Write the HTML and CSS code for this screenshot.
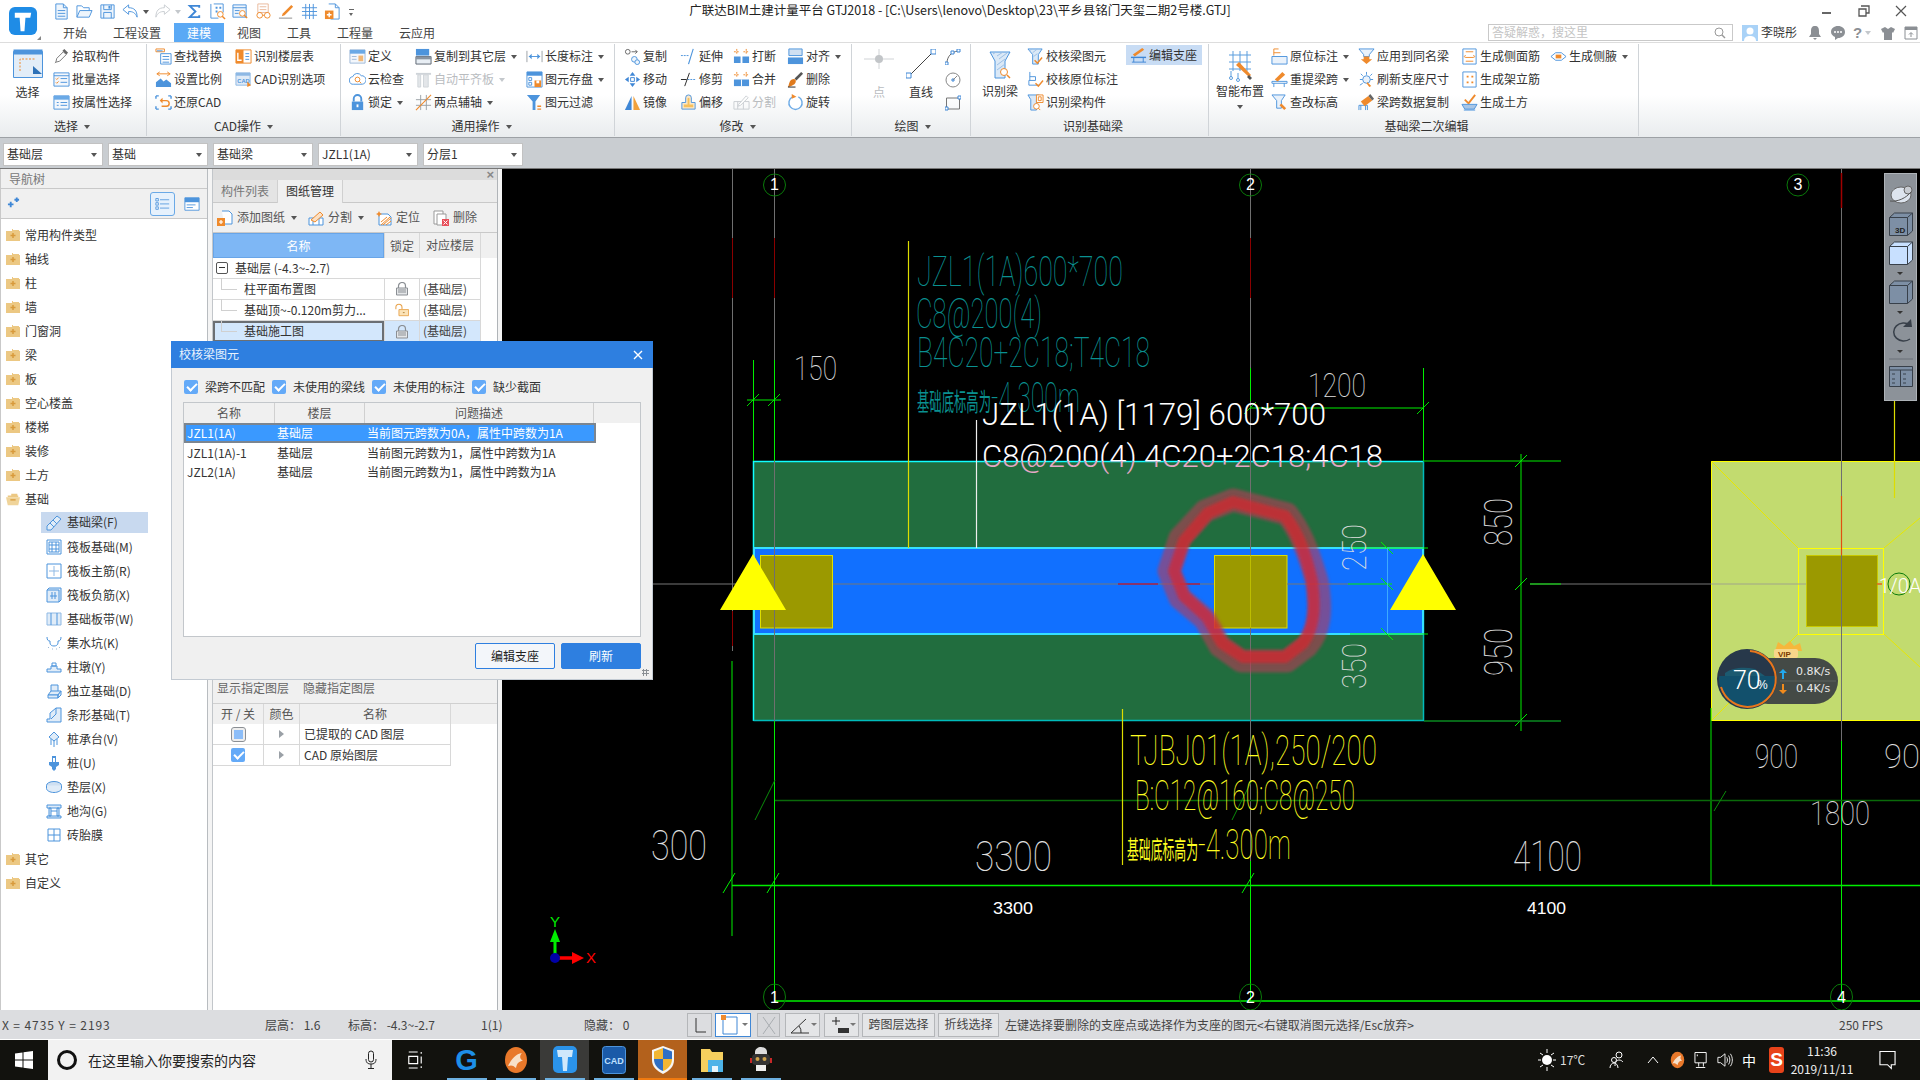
FILE: index.html
```html
<!DOCTYPE html>
<html lang="zh">
<head>
<meta charset="utf-8">
<title>广联达BIM土建计量平台 GTJ2018</title>
<link rel="stylesheet" href="styles.css">
</head>
<body>
<svg class="sprite" width="0" height="0" aria-hidden="true">
<defs>
<symbol id="i-doc" viewBox="0 0 18 18"><path d="M3 1h8l4 4v12H3z" fill="#eef5fc" stroke="#4d94dc"/><path d="M11 1v4h4M5 8h8M5 11h8M5 14h8" fill="none" stroke="#4d94dc"/></symbol>
<symbol id="i-open" viewBox="0 0 18 18"><path d="M1 15V3h5l2 2h6v3" fill="none" stroke="#4d94dc"/><path d="M1 15l3-7h13l-3 7z" fill="#eef5fc" stroke="#4d94dc"/></symbol>
<symbol id="i-save" viewBox="0 0 18 18"><path d="M2 2h14v14H2z" fill="#eef5fc" stroke="#4d94dc"/><path d="M5 2v5h8V2M5 16v-6h8v6" fill="none" stroke="#4d94dc"/><path d="M10 3h2v3h-2z" fill="#4d94dc"/></symbol>
<symbol id="i-undo" viewBox="0 0 18 18"><path d="M7 2L1 7l6 5V9c4 0 7 1 9 6 0-7-3-10-9-10z" fill="#fff" stroke="#4d94dc"/></symbol>
<symbol id="i-redo" viewBox="0 0 18 18"><path d="M11 2l6 5-6 5V9c-4 0-7 1-9 6 0-7 3-10 9-10z" fill="#fff" stroke="#c8ccd0"/></symbol>
<symbol id="i-sum" viewBox="0 0 18 18"><path d="M14 5V3H4l6 6-6 6h10v-2" fill="none" stroke="#3f87d6" stroke-width="2"/></symbol>
<symbol id="i-tabmag" viewBox="0 0 18 18"><path d="M2 1v15h8M5 1h10v9" fill="none" stroke="#4d94dc"/><path d="M7 4h2v2H7zM11 4h2v2h-2zM7 8h2v2H7z" fill="#4d94dc"/><circle cx="12" cy="12" r="3" fill="#fff" stroke="#ef8a2c"/><path d="M14 14l3 3" stroke="#ef8a2c" stroke-width="1.5"/></symbol>
<symbol id="i-listmag" viewBox="0 0 18 18"><path d="M1 2h14v13H1z" fill="#eef5fc" stroke="#4d94dc"/><path d="M1 5h14M3 8h5M3 11h4" stroke="#4d94dc"/><circle cx="11" cy="11" r="3" fill="#fff" stroke="#ef8a2c"/><path d="M13 13l3 3" stroke="#ef8a2c" stroke-width="1.5"/></symbol>
<symbol id="i-glass" viewBox="0 0 18 18"><path d="M3 1h11v9H3z" fill="#fff" stroke="#e9b89a"/><path d="M5 4h7M5 7h7" stroke="#e9b89a"/><circle cx="5" cy="13" r="3" fill="none" stroke="#ef8a2c"/><circle cx="13" cy="13" r="3" fill="none" stroke="#ef8a2c"/><path d="M8 13h2" stroke="#ef8a2c"/></symbol>
<symbol id="i-pencil" viewBox="0 0 18 18"><path d="M5 11L14 2l2 2-9 9-3 1z" fill="#ef8a2c"/><path d="M1 16h14" stroke="#888"/></symbol>
<symbol id="i-grid" viewBox="0 0 18 18"><path d="M1 5h16M1 9h16M1 13h16M5 1v16M9 1v16M13 1v16" stroke="#4d94dc"/></symbol>
<symbol id="i-docplus" viewBox="0 0 18 18"><path d="M5 1h7l4 4v12H7" fill="#fff" stroke="#4d94dc"/><path d="M12 1v4h4" fill="none" stroke="#4d94dc"/><path d="M1 8h9v9H1z" fill="#ef8a2c"/><path d="M5.5 10v5M3 12.500h5" stroke="#fff" stroke-width="1.500"/></symbol>
<symbol id="i-select" viewBox="0 0 30 30"><path d="M.5 2.500h29v26H.5z" fill="#e2edf8" stroke="#4d94dc"/><path d="M.5.500h29v5H.5z" fill="#4d94dc"/><path d="M7 22V10h16" fill="none" stroke="#ef8a2c" stroke-dasharray="2 1.500"/><path d="M20 17l9 8h-9z" fill="#2e72b8"/></symbol>
<symbol id="i-pick" viewBox="0 0 18 18"><path d="M3 15l1-4 7-7 3 3-7 7z" fill="#fff" stroke="#777"/><path d="M10 3l2-2 4 4-2 2z" fill="#666"/><path d="M2 16l1-1" stroke="#777"/></symbol>
<symbol id="i-batch" viewBox="0 0 18 18"><path d="M1 2h16v14H1z" fill="#f3f7fc" stroke="#4d94dc"/><path d="M1 5h16" stroke="#4d94dc"/><path d="M3 8l1 1 2-2M3 12l1 1 2-2" fill="none" stroke="#ef8a2c"/><path d="M8 8h7M8 12h7" stroke="#4d94dc"/></symbol>
<symbol id="i-attr" viewBox="0 0 18 18"><path d="M1 2h16v14H1z" fill="#f3f7fc" stroke="#4d94dc"/><path d="M1 2h16v4H1z" fill="#6aa9e6"/><path d="M4 9h2M4 12h2M8 9h7M8 12h7" stroke="#4d94dc"/></symbol>
<symbol id="i-find" viewBox="0 0 18 18"><path d="M6 6h11v11H6z" fill="#fff" stroke="#4d94dc"/><path d="M8 9h7M8 12h7M8 15h7" stroke="#4d94dc"/><path d="M1 1h9v3H1z" fill="none" stroke="#ef8a2c"/><path d="M2 3h6" stroke="#4d94dc"/></symbol>
<symbol id="i-scale" viewBox="0 0 18 18"><path d="M1 17v-5l5-4 3 3 3-2 5 4v4z" fill="#4d94dc"/><path d="M2 3h14M2 3l3-2M2 3l3 2M16 3l-3-2M16 3l-3 2" fill="none" stroke="#ef8a2c"/></symbol>
<symbol id="i-restore" viewBox="0 0 18 18"><path d="M1 2h3M1 2v3M17 2h-3M17 2v3M1 16h3M1 16v-3M17 16h-3M17 16v-3" fill="none" stroke="#4d94dc" stroke-width="1.500"/><path d="M6 7h6a2 2 0 0 1 0 6H7" fill="none" stroke="#ef8a2c" stroke-width="1.500"/><path d="M8 4L5 7l3 3z" fill="#ef8a2c"/></symbol>
<symbol id="i-fltable" viewBox="0 0 18 18"><path d="M1 2h16v14H1z" fill="#fff" stroke="#ef8a2c"/><path d="M1 2h8v14H1z" fill="#ef8a2c"/><path d="M3 5v8h4" fill="none" stroke="#fff" stroke-width="1.500"/><path d="M11 6h4M11 9h4M11 12h4" stroke="#4d94dc"/></symbol>
<symbol id="i-cadopt" viewBox="0 0 18 18"><path d="M1 2h15v13H1z" fill="#dfeaf6" stroke="#8db8e4"/><path d="M1 2h15v3H1z" fill="#8db8e4"/><text x="2.500" y="12.500" font-size="6" fill="#4d94dc" class="ictext">CAD</text><path d="M13 11l4 4-4 2z" fill="#ef8a2c"/></symbol>
<symbol id="i-define" viewBox="0 0 18 18"><path d="M1 2h16v14H1z" fill="#f3f7fc" stroke="#9db9d8"/><path d="M1 2h16v4H1z" fill="#6aa9e6"/><path d="M3 9h5M3 12h5" stroke="#9db9d8"/><path d="M10 8h5v6h-5z" fill="#f1b877"/></symbol>
<symbol id="i-cloud" viewBox="0 0 18 18"><path d="M5 14a4 4 0 0 1-1-8 5 5 0 0 1 9-1 4.500 4.500 0 0 1 1 9z" fill="#fff" stroke="#4d94dc"/><circle cx="9" cy="9" r="2.500" fill="none" stroke="#ef8a2c"/><path d="M11 11l2 2" stroke="#ef8a2c"/></symbol>
<symbol id="i-lock" viewBox="0 0 18 18"><path d="M5 8V5a4 4 0 0 1 8 0v3" fill="none" stroke="#4d94dc" stroke-width="2"/><path d="M3 8h12v9H3z" fill="#4d94dc"/><path d="M8 11h2v3H8z" fill="#fff"/></symbol>
<symbol id="i-copyto" viewBox="0 0 18 18"><path d="M1 1h14v7H1z" fill="#4d94dc"/><path d="M1 9h16v8H1z" fill="#e8eef4" stroke="#5a6470"/><path d="M1 9h16v3H1z" fill="#8a94a0"/></symbol>
<symbol id="i-auto" viewBox="0 0 18 18"><path d="M1 2h16v2H1z" fill="#cfd4d9"/><path d="M3 4h3v13H3zM9 4h5v13H9z" fill="#e3e6e9" stroke="#cfd4d9"/></symbol>
<symbol id="i-twopt" viewBox="0 0 18 18"><path d="M1 6h16M1 12h16M6 1v16M12 1v16" stroke="#9aa0a6"/><path d="M1 17L17 1" stroke="#ef8a2c" stroke-width="1.200"/></symbol>
<symbol id="i-length" viewBox="0 0 18 18"><path d="M1 3v12M17 3v12" stroke="#9aa0a6"/><path d="M3 9h12" stroke="#4d94dc"/><path d="M3 9l3-3v6zM15 9l-3-3v6z" fill="#4d94dc"/></symbol>
<symbol id="i-saveel" viewBox="0 0 18 18"><path d="M1 1h16v16H1z" fill="#fff" stroke="#4d94dc"/><path d="M1 1h16v4H1z" fill="#4d94dc"/><path d="M3 7h3v3H3zM3 12h3v3H3z" fill="none" stroke="#4d94dc"/><path d="M9 10h7v7H9z" fill="#ef8a2c"/><path d="M11 10h3v3h-3z" fill="#fff"/></symbol>
<symbol id="i-filter" viewBox="0 0 18 18"><path d="M1 1h14l-5 7v9H7V8z" fill="#4d94dc"/><path d="M12 13h4M12 16h4" stroke="#ef8a2c" stroke-width="1.500"/></symbol>
<symbol id="i-copy" viewBox="0 0 18 18"><circle cx="4" cy="4" r="2.500" fill="none" stroke="#666"/><circle cx="11" cy="12" r="3" fill="#eef5fc" stroke="#4d94dc"/><circle cx="14" cy="15" r="2.500" fill="#eef5fc" stroke="#4d94dc"/><path d="M8 4h6l-2-2m2 2l-2 2" fill="none" stroke="#666"/></symbol>
<symbol id="i-move" viewBox="0 0 18 18"><path d="M9 1l3 4H6zM9 17l3-4H6zM1 9l4-3v6zM17 9l-4-3v6z" fill="#3f87d6"/><path d="M7 7h4v4H7z" fill="none" stroke="#3f87d6"/></symbol>
<symbol id="i-mirror" viewBox="0 0 18 18"><path d="M8 2v15H1z" fill="#3f87d6"/><path d="M10 2v15h7z" fill="#f1a13c"/></symbol>
<symbol id="i-extend" viewBox="0 0 18 18"><path d="M1 8h8" stroke="#4d94dc" stroke-dasharray="2 1"/><path d="M14 1L9 17" stroke="#4d94dc" stroke-width="1.200"/></symbol>
<symbol id="i-trim" viewBox="0 0 18 18"><path d="M1 9h6" stroke="#222"/><path d="M8 9h9" stroke="#4d94dc" stroke-dasharray="2 1"/><path d="M10 2L5 16" stroke="#222"/></symbol>
<symbol id="i-offset" viewBox="0 0 18 18"><path d="M6 4a3 3 0 0 1 6 0v5h4v7H2V9h4z" fill="#fbe7c8" stroke="#4d94dc"/><path d="M8 5a1 1 0 0 1 2 0v6h4v3H4v-3h4z" fill="#f6c05c"/></symbol>
<symbol id="i-break" viewBox="0 0 18 18"><path d="M1 9h7v7H1zM10 9h7v7h-7z" fill="#4d94dc"/><path d="M1 4h6M4 1v6M11 4h6M14 1v6" stroke="#ef8a2c" stroke-dasharray="2 1"/></symbol>
<symbol id="i-merge" viewBox="0 0 18 18"><path d="M1 9h16v7H1z" fill="#4d94dc"/><path d="M9 9v7" stroke="#fff"/><path d="M1 4h6M4 1v6M11 4h6M14 1v6" stroke="#ef8a2c" stroke-dasharray="2 1"/></symbol>
<symbol id="i-split" viewBox="0 0 18 18"><path d="M1 8h16v8H1zM5 8v8M11 8v8" fill="none" stroke="#c9cdd1"/><path d="M6 11L14 2l2 2-8 8-3 1z" fill="#fff" stroke="#c9cdd1"/></symbol>
<symbol id="i-align" viewBox="0 0 18 18"><path d="M2 1h14v7H2z" fill="#cfe0f2" stroke="#4d94dc"/><path d="M1 10h16v7H1z" fill="#4d94dc"/></symbol>
<symbol id="i-del" viewBox="0 0 18 18"><path d="M8 8L15 1l2 2-7 7z" fill="#555"/><path d="M3 11c2-3 5-3 6-2 1 2 0 5-3 6-2 1-4 2-5 2 1-2 1-4 2-6z" fill="#e07b1e"/><path d="M1 17h8" stroke="#222"/></symbol>
<symbol id="i-rotate" viewBox="0 0 18 18"><path d="M6 3a7 7 0 1 0 6 0" fill="#fff" stroke="#6aa9e6" stroke-width="1.500"/><path d="M5 0l5 3-5 2z" fill="#ef8a2c"/></symbol>
<symbol id="i-point" viewBox="0 0 30 20"><path d="M0 10h30M15 0v20" stroke="#d0d3d6"/><circle cx="15" cy="10" r="4" fill="#c2c5c8"/></symbol>
<symbol id="i-line" viewBox="0 0 30 30"><path d="M3 27L27 3" stroke="#444"/><path d="M0 24h5v5H0zM25 0h5v5h-5z" fill="#fff" stroke="#3f87d6"/></symbol>
<symbol id="i-arc" viewBox="0 0 16 16"><path d="M2 14C2 8 6 3 13 2" fill="none" stroke="#666"/><path d="M0 13h3v3H0zM12 0h3v3h-3zM6 2h3v3H6z" fill="#fff" stroke="#3f87d6"/></symbol>
<symbol id="i-circ" viewBox="0 0 16 16"><circle cx="8" cy="8" r="7" fill="none" stroke="#888"/><path d="M7 7h2v2H7z" fill="#fff" stroke="#3f87d6"/><path d="M8 8l4-4" stroke="#888"/></symbol>
<symbol id="i-rect" viewBox="0 0 16 16"><path d="M1.500 3h13v11h-13z" fill="none" stroke="#777"/><path d="M0 12h3v3H0zM13 1h3v3h-3z" fill="#fff" stroke="#3f87d6"/></symbol>
<symbol id="i-idbeam" viewBox="0 0 22 28"><path d="M1 1h20l-5 9v17H6V10z" fill="#dbe9f7" stroke="#4d94dc"/><path d="M4 3l3-2M8 5l6-4M10 8l8-6M8 14l8-6M8 19l8-6" stroke="#9dc0e6"/><circle cx="15" cy="21" r="3.500" fill="#fff" stroke="#ef8a2c"/><path d="M18 24l3 3" stroke="#ef8a2c" stroke-width="1.500"/></symbol>
<symbol id="i-chkbeam" viewBox="0 0 18 18"><path d="M1 1h15l-4 6v10H6V7z" fill="#dbe9f7" stroke="#4d94dc"/><path d="M3 3l2-2M6 5l5-4M7 9l4-3" stroke="#9dc0e6"/><path d="M8 13l3 3 5-6" fill="none" stroke="#ef8a2c" stroke-width="1.500"/></symbol>
<symbol id="i-chkmark" viewBox="0 0 18 18"><path d="M3 1v9M3 6h6v4H2v5h11" fill="none" stroke="#4d94dc"/><path d="M9 13l3 3 5-6" fill="none" stroke="#ef8a2c" stroke-width="1.500"/></symbol>
<symbol id="i-idmem" viewBox="0 0 18 18"><path d="M1 1h12l-3 5v11H4V6z" fill="#dbe9f7" stroke="#4d94dc"/><path d="M10 1h7v8h-7z" fill="#fff" stroke="#ef8a2c"/><path d="M12 3h3v4h-3z" fill="none" stroke="#ef8a2c"/><circle cx="10" cy="13" r="3" fill="#fff" stroke="#ef8a2c"/><path d="M12 15l2 2" stroke="#ef8a2c"/></symbol>
<symbol id="i-edsup" viewBox="0 0 18 18"><path d="M3 8l10-7 2 2-10 7z" fill="#ef8a2c"/><path d="M1 11h16" stroke="#3f87d6" stroke-width="1.500"/><path d="M4 11v5M14 11v5M2 16h15" stroke="#3f87d6"/></symbol>
<symbol id="i-smart" viewBox="0 0 28 32"><path d="M3 5h22M3 12h22M3 19h22M7 1v20M14 1v20M21 1v20" stroke="#5b9ddd"/><path d="M13 12l12 13-2 2L10 15z" fill="#ef8a2c"/><path d="M23 25l3 3-2 2-3-3z" fill="#555"/><path d="M5 21v6M12 23v6" stroke="#5b9ddd"/><circle cx="5" cy="28" r="1.500" fill="none" stroke="#5b9ddd"/><circle cx="12" cy="30" r="1.500" fill="none" stroke="#5b9ddd"/></symbol>
<symbol id="i-orig" viewBox="0 0 18 18"><path d="M1 9h16v8H1z" fill="#eaf2fb" stroke="#4d94dc"/><path d="M3 8V1h5M3 5h7" fill="none" stroke="#ef8a2c"/></symbol>
<symbol id="i-retake" viewBox="0 0 18 18"><path d="M1 11h16v2H1zM3 13v4M14 13v4" fill="none" stroke="#4d94dc"/><path d="M4 9L12 1l3 3-8 7z" fill="#ef8a2c"/></symbol>
<symbol id="i-elev" viewBox="0 0 18 18"><path d="M1 1h14l-4 6v8H6V7z" fill="#eaf2fb" stroke="#4d94dc"/><path d="M11 10l5 5-2 2-5-5z" fill="#ef8a2c"/></symbol>
<symbol id="i-apply" viewBox="0 0 18 18"><path d="M1 1h16l-5 6v2H6V7z" fill="#eaf2fb" stroke="#4d94dc"/><path d="M6 9h6v3h3l-6 5-6-5h3z" fill="#ef8a2c"/></symbol>
<symbol id="i-refresh" viewBox="0 0 18 18"><circle cx="9" cy="9" r="4" fill="#eaf2fb" stroke="#4d94dc"/><path d="M9 1v3M3 3l2 2M15 3l-2 2M2 9h3M16 9h-3" stroke="#4d94dc"/><path d="M10 12l4 4-2 1-3-4z" fill="#ef8a2c"/><path d="M2 15l3-2" stroke="#4d94dc"/></symbol>
<symbol id="i-bcopy" viewBox="0 0 18 18"><path d="M1 17v-5h9v5M3 12v5M8 12v5" fill="none" stroke="#4d94dc"/><path d="M3 8l8-6 4 5-8 6z" fill="#ef8a2c"/><path d="M11 2l2-2 4 5-2 2z" fill="#666"/></symbol>
<symbol id="i-side" viewBox="0 0 18 18"><path d="M2 1h14v16H2z" fill="#fff" stroke="#4d94dc"/><path d="M5 4h8M5 8c-2 0-2 2 0 2h8c2 0 2-2 0-2M5 14h8" fill="none" stroke="#ef8a2c"/></symbol>
<symbol id="i-erect" viewBox="0 0 18 18"><path d="M2 1h14v16H2z" fill="#fff" stroke="#4d94dc"/><path d="M6 5h2v2H6zM11 5h2v2h-2zM6 11h2v2H6zM11 11h2v2h-2z" fill="#ef8a2c"/></symbol>
<symbol id="i-earth" viewBox="0 0 18 18"><path d="M4 6l4 4 7-9" fill="none" stroke="#ef8a2c" stroke-width="2"/><path d="M1 11h16l-3 5H4z" fill="#a9c6e6" stroke="#4d94dc"/><path d="M3 17h12" stroke="#4d94dc"/></symbol>
<symbol id="i-haunch" viewBox="0 0 18 18"><path d="M1 9l5-4h6l5 4-5 4H6z" fill="none" stroke="#4d94dc"/><path d="M6 7h6v4H6z" fill="#ef8a2c"/></symbol>
<symbol id="i-tasks" viewBox="0 0 18 18"><path d="M1 3h3v3H1zM1 8h3v3H1zM1 13h3v3H1z" fill="none" stroke="#4d94dc"/><path d="M6 4.500h11M6 9.500h11M6 14.500h11" stroke="#4d94dc"/></symbol>
<symbol id="i-panel" viewBox="0 0 18 18"><path d="M1 2h16v14H1z" fill="#fff" stroke="#4d94dc"/><path d="M1 2h16v5H1z" fill="#4d94dc"/><path d="M3 10h10M3 13h7" stroke="#4d94dc"/></symbol>
<symbol id="i-sparkle" viewBox="0 0 14 14"><path d="M1 8h6M4 5v6" stroke="#3f87d6" stroke-width="2"/><path d="M8 3h5M10.500.500v5" stroke="#3f87d6" stroke-width="2"/></symbol>
<symbol id="i-addpg" viewBox="0 0 16 16"><path d="M5 1h7l3 3v10H7" fill="#fff" stroke="#4d94dc"/><path d="M0 8h8v8H0z" fill="#ef8a2c"/><path d="M4 10v4M2 12h4" stroke="#fff" stroke-width="1.200"/></symbol>
<symbol id="i-sp" viewBox="0 0 16 16"><path d="M1 8h14v7H1zM5 8v7M11 8v7" fill="#fff" stroke="#4d94dc"/><path d="M3 10l9-8 3 3-8 7z" fill="#fbe0c4" stroke="#ef8a2c"/></symbol>
<symbol id="i-loc" viewBox="0 0 16 16"><path d="M3 4h9l3 3v8H3z" fill="#fff" stroke="#4d94dc"/><path d="M3 1l1 2 2 1-2 1-1 2-1-2-2-1 2-1z" fill="#ef8a2c"/><path d="M5 15l9-8M7 15l8-7M5 12l6-5M10 15l5-4" stroke="#ef8a2c"/></symbol>
<symbol id="i-delp" viewBox="0 0 16 16"><path d="M1 1h9v13H1z" fill="#fff" stroke="#999"/><path d="M4 4h9v11H4z" fill="#fff" stroke="#999"/><path d="M9 9h7v7H9z" fill="#e8505b"/><path d="M10.500 10.500l4 4M14.500 10.500l-4 4" stroke="#fff"/></symbol>
<symbol id="i-padlock" viewBox="0 0 14 14"><path d="M3.500 6V4a3.500 3.500 0 0 1 7 0v2" fill="none" stroke="#8b8f94" stroke-width="1.200"/><path d="M1.500 6h11v7h-11z" fill="#e4e6e8" stroke="#8b8f94"/><path d="M3 8h8M3 10h8" stroke="#8b8f94"/></symbol>
<symbol id="i-unlock" viewBox="0 0 16 14"><path d="M1 6V4a3.500 3.500 0 0 1 7 0v2" fill="none" stroke="#e8a24a" stroke-width="1.200"/><path d="M4.500 6.500h11v7h-11z" fill="#fbe3b8" stroke="#e8a24a"/><path d="M9 10h2" stroke="#a87a30"/></symbol>
<symbol id="i-fold" viewBox="0 0 14 14"><path d="M0 3h6V1h7v2h1v10H0z" fill="#ecc883"/><path d="M7 1h6v1H7z" fill="#fff"/><path d="M7 5v5M4.500 7.500h5" stroke="#d89a3c" stroke-width="1.500"/></symbol>
<symbol id="i-foldo" viewBox="0 0 16 14"><path d="M2 3h4V1h7v2h1v2H2z" fill="#ecc883"/><path d="M0 5h16l-2 9H2z" fill="#f0d49a"/><path d="M5 8h6" stroke="#d89a3c" stroke-width="1.500"/></symbol>
<symbol id="t-beam" viewBox="0 0 16 16"><path d="M1 11L11 1l4 3L5 15H1z" fill="#e0ecf8" stroke="#4d94dc"/><path d="M4 8l4 4M7 5l4 4" stroke="#4d94dc"/></symbol>
<symbol id="t-raft" viewBox="0 0 16 16"><path d="M1 1h14v14H1z" fill="none" stroke="#4d94dc"/><path d="M3 3h10v10H3zM3 6h10M3 10h10M6 3v10M10 3v10" fill="none" stroke="#4d94dc"/></symbol>
<symbol id="t-rebar" viewBox="0 0 16 16"><path d="M1 1h14v14H1z" fill="none" stroke="#4d94dc"/><path d="M8 3v10M3 8h10" stroke="#8fb9e4"/></symbol>
<symbol id="t-neg" viewBox="0 0 16 16"><path d="M1 3h12v12H1zM1 3l2-2h12v12l-2 2" fill="#e0ecf8" stroke="#4d94dc"/><path d="M6 5v7M9 5v7M4 9h7" stroke="#4d94dc"/></symbol>
<symbol id="t-band" viewBox="0 0 16 16"><path d="M1 2h14v12H1z" fill="#e0ecf8" stroke="#8fb9e4"/><path d="M5 2v12M11 2v12" stroke="#4d94dc"/></symbol>
<symbol id="t-pit" viewBox="0 0 16 16"><path d="M1 2c0 3 1 4 3 4v2c0 2 2 3 4 3s4-1 4-3V6c2 0 3-1 3-4" fill="none" stroke="#4d94dc"/><path d="M2 12l1 1M6 14h1M10 14h1M14 12l-1 1" stroke="#9db9d8"/></symbol>
<symbol id="t-pier" viewBox="0 0 16 16"><path d="M1 13v-3h4V7h6v3h4v3z" fill="#e0ecf8" stroke="#4d94dc"/><path d="M6 4h4v3H6z" fill="none" stroke="#4d94dc"/></symbol>
<symbol id="t-ind" viewBox="0 0 16 16"><path d="M5 8V2h7v6M2 12l3-4h10l-3 4z" fill="#e0ecf8" stroke="#4d94dc"/><path d="M2 12h10v3H2zM12 12l3-4v4l-3 3z" fill="#e0ecf8" stroke="#4d94dc"/></symbol>
<symbol id="t-strip" viewBox="0 0 16 16"><path d="M1 15v-3h3V6l6-5h5v14z" fill="#e0ecf8" stroke="#4d94dc"/><path d="M10 1v6l-5 5" fill="none" stroke="#4d94dc"/></symbol>
<symbol id="t-cap" viewBox="0 0 16 16"><path d="M8 1l5 5-5 4-5-4z" fill="#e0ecf8" stroke="#4d94dc"/><path d="M5 8v6M8 10v6M11 8v6" stroke="#4d94dc"/></symbol>
<symbol id="t-pile" viewBox="0 0 16 16"><path d="M6 1h4v6h3v3l-3 2v2l-2 2-2-2v-2L3 10V7h3z" fill="#4d94dc"/><path d="M7 3h2v4H7z" fill="#fff"/></symbol>
<symbol id="t-pad" viewBox="0 0 16 16"><ellipse cx="8" cy="6.500" rx="7.500" ry="4" fill="#cfe0f2" stroke="#4d94dc"/><path d="M.5 6.500v3c0 2 3.500 4 7.500 4s7.500-2 7.500-4v-3" fill="#e0ecf8" stroke="#4d94dc"/></symbol>
<symbol id="t-ditch" viewBox="0 0 16 16"><path d="M1 2h14v3H1zM3 5h2v8H3zM11 5h2v8h-2zM1 13h14v2H1zM5 8h6" fill="#e0ecf8" stroke="#4d94dc"/></symbol>
<symbol id="t-mold" viewBox="0 0 16 16"><path d="M2 2h12v12H2zM8 2v12M2 8h12" fill="none" stroke="#4d94dc"/></symbol>
<symbol id="i-ortho" viewBox="0 0 24 24"><path d="M8 5v14h10" fill="none" stroke="#333"/></symbol>
<symbol id="i-snap" viewBox="0 0 24 24"><path d="M4 4h14v17H4z" fill="#fff" stroke="#3f87d6"/><path d="M2 2h5v5H2z" fill="#ef8a2c"/></symbol>
<symbol id="i-cross" viewBox="0 0 24 24"><path d="M6 4l12 17M18 4L6 21" stroke="#a9adb1"/></symbol>
<symbol id="i-angle" viewBox="0 0 24 24"><path d="M3 20h18M3 20L18 6" fill="none" stroke="#333"/><path d="M11 13a9 9 0 0 1 2 7" fill="none" stroke="#333"/></symbol>
<symbol id="i-plusb" viewBox="0 0 24 24"><path d="M5 8h8M9 4v8" stroke="#222"/><path d="M11 15h11v5H11z" fill="#333"/></symbol>
</defs>
</svg>

<div class="app">
  <header class="top">
    <div class="logo-wrap">
      <svg class="logo" viewBox="0 0 30 30"><rect width="29" height="29" rx="6" fill="#1f8ce6"/><path d="M6 6h17l-1 5h-5l-1 14h-4l-1-14H6z" fill="#fff"/></svg>
      <span class="logo-grip"></span>
    </div>
    <div class="top-main">
      <div class="qat">
        <svg class="qi"><use href="#i-doc"/></svg>
        <svg class="qi"><use href="#i-open"/></svg>
        <svg class="qi"><use href="#i-save"/></svg>
        <svg class="qi"><use href="#i-undo"/></svg><i class="caret-d qc"></i>
        <svg class="qi qr"><use href="#i-redo"/></svg><i class="caret-l qc"></i>
        <svg class="qi"><use href="#i-sum"/></svg>
        <svg class="qi"><use href="#i-tabmag"/></svg>
        <svg class="qi"><use href="#i-listmag"/></svg>
        <svg class="qi"><use href="#i-glass"/></svg>
        <svg class="qi"><use href="#i-pencil"/></svg>
        <svg class="qi"><use href="#i-grid"/></svg>
        <svg class="qi"><use href="#i-docplus"/></svg>
        <i class="qat-more"></i>
      </div>
      <div class="tabs-row">
        <nav class="tabs">
          <span class="tab">开始</span><span class="tab">工程设置</span><span class="tab tab-on">建模</span><span class="tab">视图</span><span class="tab">工具</span><span class="tab">工程量</span><span class="tab">云应用</span>
        </nav>
        <div class="help">
          <div class="search"><span>答疑解惑，搜这里</span><svg class="mag" viewBox="0 0 12 12"><circle cx="5" cy="5" r="4" fill="none" stroke="#999"/><path d="M8 8l3 3" stroke="#999" stroke-width="1.400"/></svg></div>
          <svg class="avatar" viewBox="0 0 16 16"><rect width="16" height="16" fill="#a9d2f7"/><circle cx="8" cy="6" r="3.500" fill="#fff"/><path d="M2 16c0-4 3-5 6-5s6 1 6 5z" fill="#fff"/></svg>
          <span class="uname">李晓彤</span>
          <svg class="hi hi-bell" viewBox="0 0 14 16"><path d="M7 1c3 0 4 2 4 5v3l2 3H1l2-3V6c0-3 1-5 4-5z" fill="#8b8f94"/><path d="M5 13h4l-2 2z" fill="#8b8f94"/></svg>
          <svg class="hi hi-chat" viewBox="0 0 16 16"><path d="M8 1c4 0 7 2.500 7 6s-3 6-7 6l-3 2v-3C3 11 1 9.500 1 7c0-3.500 3-6 7-6z" fill="#8b8f94"/><path d="M4 7h2M7 7h2M10 7h2" stroke="#fff" stroke-width="1.500"/></svg>
          <span class="hq">?</span><i class="caret-l hqc"></i>
          <svg class="hi hi-shirt" viewBox="0 0 14 16"><path d="M4 2L0 4l2 4 1-1v8h8V7l1 1 2-4-4-2-3 2z" fill="#8b8f94"/></svg>
          <svg class="hi hi-box" viewBox="0 0 14 14"><path d="M1 1h12v12H1z" fill="#fff" stroke="#8b8f94"/><path d="M1 1h12v3H1z" fill="#8b8f94"/><path d="M7 11V7M5 8.500l2-2 2 2" fill="none" stroke="#8b8f94"/></svg>
        </div>
      </div>
    </div>
    <div class="title">广联达BIM土建计量平台 GTJ2018 - [C:\Users\lenovo\Desktop\23\平乡县铭门天玺二期2号楼.GTJ]</div>
    <div class="win">
      <svg viewBox="0 0 12 12" class="wb"><path d="M1 7h9v2H1z" fill="#666"/></svg>
      <svg viewBox="0 0 12 12" class="wb"><path d="M3 1h8v7H8M1 4h7v7H1zM1 4h7" fill="none" stroke="#555" stroke-width="1.300"/></svg>
      <svg viewBox="0 0 12 12" class="wb"><path d="M1 1l10 10M11 1L1 11" stroke="#555" stroke-width="1.200"/></svg>
    </div>
  </header>

  <section class="ribbon">
    <div class="group g1">
      <div class="gbody">
        <div class="big big-sel"><svg class="bi-sel"><use href="#i-select"/></svg><span>选择</span></div>
        <div class="col">
          <div class="it"><svg class="ic"><use href="#i-pick"/></svg><span>拾取构件</span></div>
          <div class="it"><svg class="ic"><use href="#i-batch"/></svg><span>批量选择</span></div>
          <div class="it"><svg class="ic"><use href="#i-attr"/></svg><span>按属性选择</span></div>
        </div>
      </div>
      <div class="glabel gl1">选择<i class="caret-d gc"></i></div>
    </div>
    <div class="group g2">
      <div class="gbody">
        <div class="col w80">
          <div class="it"><svg class="ic"><use href="#i-find"/></svg><span>查找替换</span></div>
          <div class="it"><svg class="ic"><use href="#i-scale"/></svg><span>设置比例</span></div>
          <div class="it"><svg class="ic"><use href="#i-restore"/></svg><span>还原CAD</span></div>
        </div>
        <div class="col">
          <div class="it"><svg class="ic"><use href="#i-fltable"/></svg><span>识别楼层表</span></div>
          <div class="it"><svg class="ic"><use href="#i-cadopt"/></svg><span>CAD识别选项</span></div>
        </div>
      </div>
      <div class="glabel gl2">CAD操作<i class="caret-d gc"></i></div>
    </div>
    <div class="group g3">
      <div class="gbody">
        <div class="col w66">
          <div class="it"><svg class="ic"><use href="#i-define"/></svg><span>定义</span></div>
          <div class="it"><svg class="ic"><use href="#i-cloud"/></svg><span>云检查</span></div>
          <div class="it"><svg class="ic"><use href="#i-lock"/></svg><span>锁定</span><i class="caret-d ca"></i></div>
        </div>
        <div class="col w111">
          <div class="it"><svg class="ic"><use href="#i-copyto"/></svg><span>复制到其它层</span><i class="caret-d ca"></i></div>
          <div class="it it-off"><svg class="ic"><use href="#i-auto"/></svg><span>自动平齐板</span><i class="caret-l ca"></i></div>
          <div class="it"><svg class="ic"><use href="#i-twopt"/></svg><span>两点辅轴</span><i class="caret-d ca"></i></div>
        </div>
        <div class="col">
          <div class="it"><svg class="ic"><use href="#i-length"/></svg><span>长度标注</span><i class="caret-d ca"></i></div>
          <div class="it"><svg class="ic"><use href="#i-saveel"/></svg><span>图元存盘</span><i class="caret-d ca"></i></div>
          <div class="it"><svg class="ic"><use href="#i-filter"/></svg><span>图元过滤</span></div>
        </div>
      </div>
      <div class="glabel">通用操作<i class="caret-d gc"></i></div>
    </div>
    <div class="group g4">
      <div class="gbody">
        <div class="col w56">
          <div class="it"><svg class="ic"><use href="#i-copy"/></svg><span>复制</span></div>
          <div class="it"><svg class="ic"><use href="#i-move"/></svg><span>移动</span></div>
          <div class="it"><svg class="ic"><use href="#i-mirror"/></svg><span>镜像</span></div>
        </div>
        <div class="col w53">
          <div class="it"><svg class="ic"><use href="#i-extend"/></svg><span>延伸</span></div>
          <div class="it"><svg class="ic"><use href="#i-trim"/></svg><span>修剪</span></div>
          <div class="it"><svg class="ic"><use href="#i-offset"/></svg><span>偏移</span></div>
        </div>
        <div class="col w54">
          <div class="it"><svg class="ic"><use href="#i-break"/></svg><span>打断</span></div>
          <div class="it"><svg class="ic"><use href="#i-merge"/></svg><span>合并</span></div>
          <div class="it it-off"><svg class="ic"><use href="#i-split"/></svg><span>分割</span></div>
        </div>
        <div class="col">
          <div class="it"><svg class="ic"><use href="#i-align"/></svg><span>对齐</span><i class="caret-d ca"></i></div>
          <div class="it"><svg class="ic"><use href="#i-del"/></svg><span>删除</span></div>
          <div class="it"><svg class="ic"><use href="#i-rotate"/></svg><span>旋转</span></div>
        </div>
      </div>
      <div class="glabel">修改<i class="caret-d gc"></i></div>
    </div>
    <div class="group g5">
      <div class="gbody">
        <div class="big big-pt"><svg class="bi-pt"><use href="#i-point"/></svg><span>点</span></div>
        <div class="big big-ln"><svg class="bi-ln"><use href="#i-line"/></svg><span>直线</span></div>
        <div class="col col-sm">
          <svg class="sm"><use href="#i-arc"/></svg>
          <svg class="sm"><use href="#i-circ"/></svg>
          <svg class="sm"><use href="#i-rect"/></svg>
        </div>
      </div>
      <div class="glabel">绘图<i class="caret-d gc"></i></div>
    </div>
    <div class="group g6">
      <div class="gbody">
        <div class="big big-id"><svg class="bi-id"><use href="#i-idbeam"/></svg><span>识别梁</span></div>
        <div class="col w99">
          <div class="it"><svg class="ic"><use href="#i-chkbeam"/></svg><span>校核梁图元</span></div>
          <div class="it"><svg class="ic"><use href="#i-chkmark"/></svg><span>校核原位标注</span></div>
          <div class="it"><svg class="ic"><use href="#i-idmem"/></svg><span>识别梁构件</span></div>
        </div>
        <div class="col">
          <div class="it it-on"><svg class="ic"><use href="#i-edsup"/></svg><span>编辑支座</span></div>
        </div>
      </div>
      <div class="glabel">识别基础梁</div>
    </div>
    <div class="group g7">
      <div class="gbody">
        <div class="big big-sm"><svg class="bi-sm"><use href="#i-smart"/></svg><span>智能布置</span><i class="caret-d sm-c"></i></div>
        <div class="col w87">
          <div class="it"><svg class="ic"><use href="#i-orig"/></svg><span>原位标注</span><i class="caret-d ca"></i></div>
          <div class="it"><svg class="ic"><use href="#i-retake"/></svg><span>重提梁跨</span><i class="caret-d ca"></i></div>
          <div class="it"><svg class="ic"><use href="#i-elev"/></svg><span>查改标高</span></div>
        </div>
        <div class="col w103">
          <div class="it"><svg class="ic"><use href="#i-apply"/></svg><span>应用到同名梁</span></div>
          <div class="it"><svg class="ic"><use href="#i-refresh"/></svg><span>刷新支座尺寸</span></div>
          <div class="it"><svg class="ic"><use href="#i-bcopy"/></svg><span>梁跨数据复制</span></div>
        </div>
        <div class="col w89">
          <div class="it"><svg class="ic"><use href="#i-side"/></svg><span>生成侧面筋</span></div>
          <div class="it"><svg class="ic"><use href="#i-erect"/></svg><span>生成架立筋</span></div>
          <div class="it"><svg class="ic"><use href="#i-earth"/></svg><span>生成土方</span></div>
        </div>
        <div class="col">
          <div class="it"><svg class="ic"><use href="#i-haunch"/></svg><span>生成侧腋</span><i class="caret-d ca"></i></div>
        </div>
      </div>
      <div class="glabel">基础梁二次编辑</div>
    </div>
  </section>

  <section class="combos">
    <div class="combo">基础层<i class="caret-d"></i></div>
    <div class="combo">基础<i class="caret-d"></i></div>
    <div class="combo">基础梁<i class="caret-d"></i></div>
    <div class="combo">JZL1(1A)<i class="caret-d"></i></div>
    <div class="combo">分层1<i class="caret-d"></i></div>
  </section>

  <main class="main">
    <aside class="nav">
      <div class="nav-head">导航树</div>
      <div class="nav-tools">
        <svg class="spark"><use href="#i-sparkle"/></svg>
        <span class="nt-btn"><svg class="nt-ic"><use href="#i-tasks"/></svg></span>
        <svg class="nt-ic2"><use href="#i-panel"/></svg>
      </div>
      <div class="tree">
        <div class="tr"><svg class="f"><use href="#i-fold"/></svg>常用构件类型</div>
        <div class="tr"><svg class="f"><use href="#i-fold"/></svg>轴线</div>
        <div class="tr"><svg class="f"><use href="#i-fold"/></svg>柱</div>
        <div class="tr"><svg class="f"><use href="#i-fold"/></svg>墙</div>
        <div class="tr"><svg class="f"><use href="#i-fold"/></svg>门窗洞</div>
        <div class="tr"><svg class="f"><use href="#i-fold"/></svg>梁</div>
        <div class="tr"><svg class="f"><use href="#i-fold"/></svg>板</div>
        <div class="tr"><svg class="f"><use href="#i-fold"/></svg>空心楼盖</div>
        <div class="tr"><svg class="f"><use href="#i-fold"/></svg>楼梯</div>
        <div class="tr"><svg class="f"><use href="#i-fold"/></svg>装修</div>
        <div class="tr"><svg class="f"><use href="#i-fold"/></svg>土方</div>
        <div class="tr"><svg class="f"><use href="#i-foldo"/></svg>基础</div>
        <div class="tr tc tc-on"><svg class="k"><use href="#t-beam"/></svg>基础梁(F)</div>
        <div class="tr tc"><svg class="k"><use href="#t-raft"/></svg>筏板基础(M)</div>
        <div class="tr tc"><svg class="k"><use href="#t-rebar"/></svg>筏板主筋(R)</div>
        <div class="tr tc"><svg class="k"><use href="#t-neg"/></svg>筏板负筋(X)</div>
        <div class="tr tc"><svg class="k"><use href="#t-band"/></svg>基础板带(W)</div>
        <div class="tr tc"><svg class="k"><use href="#t-pit"/></svg>集水坑(K)</div>
        <div class="tr tc"><svg class="k"><use href="#t-pier"/></svg>柱墩(Y)</div>
        <div class="tr tc"><svg class="k"><use href="#t-ind"/></svg>独立基础(D)</div>
        <div class="tr tc"><svg class="k"><use href="#t-strip"/></svg>条形基础(T)</div>
        <div class="tr tc"><svg class="k"><use href="#t-cap"/></svg>桩承台(V)</div>
        <div class="tr tc"><svg class="k"><use href="#t-pile"/></svg>桩(U)</div>
        <div class="tr tc"><svg class="k"><use href="#t-pad"/></svg>垫层(X)</div>
        <div class="tr tc"><svg class="k"><use href="#t-ditch"/></svg>地沟(G)</div>
        <div class="tr tc"><svg class="k"><use href="#t-mold"/></svg>砖胎膜</div>
        <div class="tr"><svg class="f"><use href="#i-fold"/></svg>其它</div>
        <div class="tr"><svg class="f"><use href="#i-fold"/></svg>自定义</div>
      </div>
    </aside>

    <section class="panel">
      <div class="p-close"><span>×</span></div>
      <div class="p-tabs"><span class="pt">构件列表</span><span class="pt pt-on">图纸管理</span></div>
      <div class="p-tools">
        <span class="pb pb1"><svg class="pi"><use href="#i-addpg"/></svg>添加图纸<i class="caret-d"></i></span>
        <span class="pb pb2"><svg class="pi"><use href="#i-sp"/></svg>分割<i class="caret-d"></i></span>
        <span class="pb pb3"><svg class="pi"><use href="#i-loc"/></svg>定位</span>
        <span class="pb"><svg class="pi"><use href="#i-delp"/></svg>删除</span>
      </div>
      <div class="dwg">
        <div class="dh"><span class="dc1 dh-on">名称</span><span class="dc2">锁定</span><span class="dc3">对应楼层</span></div>
        <div class="dr dr-root"><i class="minus"></i>基础层 (-4.3~-2.7)</div>
        <div class="dr"><span class="dc1 lv2">柱平面布置图</span><span class="dc2"><svg class="lk"><use href="#i-padlock"/></svg></span><span class="dc3">(基础层)</span></div>
        <div class="dr"><span class="dc1 lv2">基础顶~-0.120m剪力...</span><span class="dc2"><svg class="lk"><use href="#i-unlock"/></svg></span><span class="dc3">(基础层)</span></div>
        <div class="dr dr-sel"><span class="dc1 lv2">基础施工图</span><span class="dc2"><svg class="lk"><use href="#i-padlock"/></svg></span><span class="dc3">(基础层)</span></div>
      </div>
      <div class="layers">
        <div class="l-acts"><span>显示指定图层</span><span>隐藏指定图层</span></div>
        <div class="lh"><span class="lc1">开 / 关</span><span class="lc2">颜色</span><span class="lc3">名称</span></div>
        <div class="lr"><span class="lc1"><i class="cbx cbx-sq"></i></span><span class="lc2"><i class="tri"></i></span><span class="lc3 tl">已提取的 CAD 图层</span></div>
        <div class="lr"><span class="lc1"><i class="cbx"></i></span><span class="lc2"><i class="tri"></i></span><span class="lc3 tl">CAD 原始图层</span></div>
      </div>
    </section>

    <div class="canvas">
      <svg class="cad" viewBox="502 168 1418 842" width="1418" height="842">
        <defs>
          <linearGradient id="pinkline" gradientUnits="userSpaceOnUse" x1="0" y1="440" x2="0" y2="480">
            <stop offset="0.500" stop-color="#fff"/><stop offset="0.500" stop-color="#e6a8c4"/>
          </linearGradient>
          <filter id="soft" x="-10%" y="-10%" width="120%" height="120%"><feGaussianBlur stdDeviation="1.800"/></filter>
          <clipPath id="circ70"><circle cx="1747" cy="678" r="28"/></clipPath>
        </defs>
        <rect x="502" y="168" width="1418" height="842" fill="#000"/>

        <rect x="753.500" y="460.500" width="670" height="259" fill="#216d3e"/>
        <path d="M753.500 720V460.500H1423.500" fill="none" stroke="#1ff" stroke-width="1.500"/>
        <path d="M753.500 719.500H1423.500V460.500" fill="none" stroke="#0bb" stroke-width="1.500"/>
        <rect x="754" y="547" width="669" height="86" fill="#1170ff" stroke="#35e0ff" stroke-width="2"/>
        <rect x="760.500" y="554.500" width="72" height="72.500" fill="#9b9900" stroke="#dede00"/>
        <rect x="1214.500" y="554.500" width="72.500" height="72.500" fill="#9b9900" stroke="#dede00"/>

        <rect x="1711.500" y="460.500" width="210" height="259" fill="#c2db6f" stroke="#ff0"/>
        <path d="M1711 460l87 87M1884 547l36-30M1884 633l36 33M1798 633l-87 87" stroke="#e8e800"/>
        <rect x="1798.500" y="547.500" width="85" height="86" fill="none" stroke="#ff0"/>
        <rect x="1806.500" y="554.500" width="71" height="71" fill="#9b9900" stroke="#c8c800"/>

        <path d="M502 583H760M833 583H1214M1287 583H1350M1530 583H1711" stroke="#777" stroke-width="1.200"/>
        <path d="M1711 583H1806" stroke="#a0a58a" stroke-width="1.200"/>
        <path d="M732.500 168V650M774.500 168V720M1250.500 168V860M1841.500 168V760" stroke="#6f6f6f"/>
        <path d="M1250.500 554V627" stroke="#bdbd00"/>
        <path d="M732.500 237V297M774.500 237V297M1250.500 237V297M732.500 610V645" stroke="#8a0000"/>
        <path d="M1841.500 172V207" stroke="#a00000" stroke-width="1.500"/>
        <path d="M1841.500 495V554" stroke="#e05010" stroke-width="1.200"/>
        <path d="M1877 583h5" stroke="#e8601c" stroke-width="1.500"/>
        <path d="M1118 583h40M1180 583h20" stroke="#a02050" stroke-width="1.500"/>

        <g stroke="#0e0" fill="none">
          <path d="M753.500 359V460M774.500 359V460M747 399H781M1250.500 367V400M1423.500 367V460M1250 407H1423"/>
          <path d="M747 405l12-12M768 405l12-12M1417 413l12-12M1244 413l12-12" stroke-width=".9"/>
          <path d="M1424 460H1561M1521 453V730M1350 547H1428M1350 633H1428M1348 583H1392M1530 583H1561"/>
          <path d="M1515 466l12-12M1515 589l12-12M1515 725l12-12"/>
          <path d="M1381 541l12 12M1381 577l12 12M1381 627l12 12"/>
        </g>
        <path d="M1424 720H1561" stroke="#0a8a20" stroke-width="1.500"/>
        <path d="M1387.500 547V633" stroke="#4fc4ff" stroke-width=".7"/>
        <g stroke="#0e0" fill="none">
          <path d="M732 660V935M774.500 720V1000M1250.500 860V1000M1711 707V884M1841.500 740V1000"/>
          <path d="M732 884.500H1920M775 1000H1920" stroke-width="1.500"/>
          <path d="M723 892l12-20M767 892l12-20M1242 892l12-20"/>
        </g>
        <path d="M775 799.500H1920" stroke="#0a6a0a" stroke-width="1.300"/>
        <path d="M755 819l20-40M1232 819l20-40M1714 810l12-20" stroke="#0a8a0a"/>

        <path d="M908.500 240V547M1122.500 708V864M1894.500 400V497" stroke="#dd0" stroke-width="1.200"/>
        <path d="M976.500 419V547" stroke="#eee" stroke-width="1.200"/>

        <g class="cadt">
          <text class="c-teal t42" x="917" y="285" textLength="206" lengthAdjust="spacingAndGlyphs">JZL1(1A)600*700</text>
          <text class="c-teal t42" x="916" y="327" textLength="126" lengthAdjust="spacingAndGlyphs">C8@200(4)</text>
          <text class="c-teal t42" x="917" y="366" textLength="233" lengthAdjust="spacingAndGlyphs">B4C20+2C18;T4C18</text>
          <text class="c-teal cj" x="917" y="410" textLength="74" lengthAdjust="spacingAndGlyphs">基础底标高为</text>
          <text class="c-teal t42" x="991" y="411" textLength="89" lengthAdjust="spacingAndGlyphs">-4.300m</text>
          <text class="c-grey t34" x="794" y="379" textLength="43" lengthAdjust="spacingAndGlyphs">150</text>
          <text class="c-grey t34" x="1308" y="396" textLength="58" lengthAdjust="spacingAndGlyphs">1200</text>
          <text class="c-grey t34" transform="translate(1366 570) rotate(-90)" textLength="47" lengthAdjust="spacingAndGlyphs">250</text>
          <text class="c-grey t34" transform="translate(1366 688) rotate(-90)" textLength="46" lengthAdjust="spacingAndGlyphs">350</text>
          <text class="c-grey t38" transform="translate(1512 545) rotate(-90)" textLength="48" lengthAdjust="spacingAndGlyphs">850</text>
          <text class="c-grey t38" transform="translate(1512 675) rotate(-90)" textLength="48" lengthAdjust="spacingAndGlyphs">950</text>
          <text class="c-grey t42" x="651" y="859" textLength="56" lengthAdjust="spacingAndGlyphs">300</text>
          <text class="c-grey t42" x="975" y="870" textLength="77" lengthAdjust="spacingAndGlyphs">3300</text>
          <text class="c-grey t42" x="1513" y="870" textLength="69" lengthAdjust="spacingAndGlyphs">4100</text>
          <text class="c-grey t34" x="1755" y="767" textLength="43" lengthAdjust="spacingAndGlyphs">900</text>
          <text class="c-grey t34" x="1884" y="767" textLength="36" lengthAdjust="spacingAndGlyphs">90</text>
          <text class="c-grey t34" x="1810" y="824" textLength="60" lengthAdjust="spacingAndGlyphs">1800</text>
          <text class="c-yel t42" x="1130" y="764" textLength="247" lengthAdjust="spacingAndGlyphs">TJBJ01(1A),250/200</text>
          <text class="c-yel t42" x="1135" y="809" textLength="220" lengthAdjust="spacingAndGlyphs">B:C12@160;C8@250</text>
          <text class="c-yel cj" x="1127" y="858" textLength="71" lengthAdjust="spacingAndGlyphs">基础底标高为</text>
          <text class="c-yel t42" x="1198" y="858" textLength="93" lengthAdjust="spacingAndGlyphs">-4.300m</text>
        </g>
        <g class="cadw">
          <text class="w16" x="993" y="913" textLength="40" lengthAdjust="spacingAndGlyphs">3300</text>
          <text class="w16" x="1527" y="913" textLength="39" lengthAdjust="spacingAndGlyphs">4100</text>
        </g>

        <path d="M753 553l33 56h-66zM1423 553l33 56h-66z" fill="#ff0"/>

        <g fill="none" stroke-linejoin="round">
          <path d="M1233 499L1287 513C1300 530 1307 547 1317 580C1322 610 1320 630 1307 645L1287 660H1241L1220 645L1205 618L1180 597L1169 570L1180 537L1205 510Z" stroke="#b83a56" stroke-width="23" opacity=".6" filter="url(#soft)"/>
          <path d="M1233 501L1285 515C1298 532 1305 550 1312 580C1316 610 1313 628 1303 642L1285 656H1243L1222 642L1207 616L1184 595L1174 570L1184 540L1208 512Z" stroke="#d8282f" stroke-width="12" opacity=".7" filter="url(#soft)"/>
        </g>

        <g class="lbl">
          <text x="982" y="424" textLength="344" lengthAdjust="spacingAndGlyphs" fill="#fff">JZL1(1A) [1179] 600*700</text>
          <text x="982" y="466" textLength="401" lengthAdjust="spacingAndGlyphs" fill="url(#pinkline)">C8@200(4) 4C20+2C18;4C18</text>
        </g>

        <g fill="none" stroke="#0a7a0a">
          <circle cx="774.500" cy="184" r="11"/><circle cx="1250.500" cy="184" r="11"/><circle cx="1798" cy="184" r="11"/><circle cx="1899" cy="583" r="11"/>
          <ellipse cx="774.500" cy="996" rx="11" ry="13"/><ellipse cx="1250.500" cy="996" rx="11" ry="13"/><ellipse cx="1841.500" cy="996" rx="11" ry="13"/>
        </g>
        <g class="bub">
          <text x="774.500" y="189">1</text><text x="1250.500" y="189">2</text><text x="1798" y="189">3</text>
          <text x="774.500" y="1002">1</text><text x="1250.500" y="1002">2</text><text x="1841.500" y="1002">4</text>
          <text class="b-a" x="1900" y="592">1/0A</text>
        </g>

        <path d="M555 958V940" stroke="#0e0" stroke-width="3"/><path d="M555 928l5 13h-10z" fill="#0e0"/>
        <path d="M555 957h18" stroke="#f00" stroke-width="3.500"/><path d="M584 957l-12-6v12z" fill="#f00"/>
        <circle cx="555" cy="957" r="5" fill="#0000a8"/>
        <text class="ax ax-y" x="555" y="926">Y</text><text class="ax ax-x" x="591" y="962">X</text>

        <g>
          <rect x="1884.500" y="172.500" width="32" height="227" fill="#8c9299" stroke="#aeb3b8"/>
          <ellipse cx="1901" cy="194" rx="10" ry="8" fill="#dde4ee" stroke="#666"/><circle cx="1908" cy="189" r="4" fill="#c8ccd2" stroke="#666"/><path d="M1890 200c8 1 16-3 21-9" fill="none" stroke="#555"/>
          <path d="M1889.500 216.500h18v18h-18zM1889.500 216.500l5-4.500h18v18l-5 4.500M1907.500 216.500l5-4.500" fill="#7d8fa5" stroke="#38404a"/>
          <text class="tb3d" x="1895" y="232">3D</text>
          <path d="M1889.500 245.500h18v18h-18zM1889.500 245.500l5-4.500h18v18l-5 4.500M1907.500 245.500l5-4.500" fill="#c8e0ff" stroke="#38404a"/>
          <path d="M1897 271h6l-3 3z" fill="#333"/>
          <path d="M1889.500 284.500h18v18h-18zM1889.500 284.500l5-4.500h18v18l-5 4.500M1907.500 284.500l5-4.500" fill="#7d8fa5" stroke="#38404a"/>
          <path d="M1897 310h6l-3 3z" fill="#333"/>
          <path d="M1910 324a10 9 0 1 0 0 14" fill="none" stroke="#38404a" stroke-width="1.500"/><path d="M1903 326l9 0-1-8z" fill="#38404a"/>
          <path d="M1897 349h6l-3 3z" fill="#333"/>
          <path d="M1889 358h24" stroke="#6a7078"/>
          <path d="M1889.500 365.500h23v20h-23zM1889.500 369h23M1900.500 369v16M1892 373h3M1892 378h3M1892 382h3M1903 373h3M1903 378h3M1903 382h3" fill="#7d8fa5" stroke="#38404a"/>
        </g>

        <g>
          <path d="M1775 650l3-9 6 4 6-5 4 5 6-3 2 8z" fill="#f6b73c"/>
          <rect x="1774" y="648" width="24" height="9" rx="2" fill="#f8d68a"/>
          <text class="vip" x="1778" y="656">VIP</text>
          <rect x="1745" y="657" width="93" height="46" rx="23" fill="#444a46"/>
          <path d="M1780 680h56" stroke="#5a605c"/>
          <path d="M1783 668l-4 4h3v6h2v-6h3z" fill="#22a8ee"/>
          <path d="M1783 693l-4-4h3v-6h2v6h3z" fill="#f08a1c"/>
          <text class="net" x="1796" y="674">0.8K/s</text>
          <text class="net" x="1796" y="691">0.4K/s</text>
          <circle cx="1747" cy="678" r="30" fill="#27384a"/>
          <rect x="1718" y="675" width="60" height="34" fill="#12506c" clip-path="url(#circ70)"/>
          <path d="M1725 672c8-6 20-6 30-4l10 7h-40z" fill="#1c5a70" clip-path="url(#circ70)"/>
          <path d="M1750 650a28 28 0 1 1-29 36" fill="none" stroke="#e8761c" stroke-width="2"/>
          <text class="pct" x="1733" y="688">70</text><text class="pctm" x="1757" y="688">%</text>
        </g>
      </svg>
    </div>

    <div class="dlg">
      <div class="dlg-title"><span>校核梁图元</span><svg class="dlg-x" viewBox="0 0 10 10"><path d="M1 1l8 8M9 1L1 9" stroke="#fff" stroke-width="1.400"/></svg></div>
      <div class="dlg-body">
        <div class="chk-row">
          <label class="chk chk1"><i class="cbx"></i>梁跨不匹配</label>
          <label class="chk chk2"><i class="cbx"></i>未使用的梁线</label>
          <label class="chk chk2"><i class="cbx"></i>未使用的标注</label>
          <label class="chk"><i class="cbx"></i>缺少截面</label>
        </div>
        <div class="grid">
          <div class="gh"><span class="gc1">名称</span><span class="gc2">楼层</span><span class="gc3">问题描述</span></div>
          <div class="gr gr-sel"><span class="gc1">JZL1(1A)</span><span class="gc2">基础层</span><span class="gc3">当前图元跨数为0A，属性中跨数为1A</span></div>
          <div class="gr"><span class="gc1">JZL1(1A)-1</span><span class="gc2">基础层</span><span class="gc3">当前图元跨数为1，属性中跨数为1A</span></div>
          <div class="gr"><span class="gc1">JZL2(1A)</span><span class="gc2">基础层</span><span class="gc3">当前图元跨数为1，属性中跨数为1A</span></div>
        </div>
        <div class="dlg-foot"><span class="btn">编辑支座</span><span class="btn btn-p">刷新</span></div>
        <i class="grip"></i>
      </div>
    </div>
  </main>

  <footer class="status">
    <span class="s1">X = 4735 Y = 2193</span>
    <span class="s2">层高： 1.6</span>
    <span class="s3">标高： -4.3~-2.7</span>
    <span class="s4">1(1)</span>
    <span class="s5">隐藏： 0</span>
    <span class="sb sb1"><svg class="sbi"><use href="#i-ortho"/></svg></span>
    <span class="sb sb2"><svg class="sbi"><use href="#i-snap"/></svg><i class="caret-d"></i></span>
    <span class="sb sb3"><svg class="sbi"><use href="#i-cross"/></svg></span>
    <span class="sb sb4"><svg class="sbi"><use href="#i-angle"/></svg><i class="caret-d"></i></span>
    <span class="sb sb4"><svg class="sbi"><use href="#i-plusb"/></svg><i class="caret-d"></i></span>
    <span class="sb sbt1">跨图层选择</span>
    <span class="sb sbt2">折线选择</span>
    <span class="hint">左键选择要删除的支座点或选择作为支座的图元&lt;右键取消图元选择/Esc放弃&gt;</span>
    <span class="fps">250 FPS</span>
  </footer>

  <footer class="taskbar">
    <svg class="win-logo" viewBox="0 0 18 18"><path d="M0 2.500L7.500 1.500V8.500H0zM8.500 1.300L18 0V8.500H8.500zM0 9.500H7.500V16.500L0 15.500zM8.500 9.500H18V18L8.500 16.700z" fill="#fff"/></svg>
    <div class="tsearch">
      <i class="cortana"></i>
      <span>在这里输入你要搜索的内容</span>
      <svg class="tmic" viewBox="0 0 12 20"><rect x="3.500" y="1" width="5" height="11" rx="2.500" fill="none" stroke="#222"/><path d="M1 9c0 4 2 5 5 5s5-1 5-5M6 14v4M3 18.500h6" fill="none" stroke="#222"/></svg>
    </div>
    <svg class="tview" viewBox="0 0 18 20"><path d="M2 1h10M2 19h10M16 1v2M16 6v8M16 17v2" stroke="#fff" stroke-width="1.300"/><path d="M2 6h10v8H2z" fill="none" stroke="#fff" stroke-width="1.300"/></svg>
    <div class="apps">
      <span class="app-i"><span class="g-mark">G</span></span>
      <span class="app-i"><svg class="tb-ic" viewBox="0 0 24 28"><ellipse cx="12" cy="14" rx="11" ry="13" fill="#e8782a"/><path d="M4 20c4-8 8-12 14-13-3 3-2 6 1 8-4 0-6 2-7 7-3-3-5-3-8-2z" fill="#f8e0c8"/></svg></span>
      <span class="app-i app-t"><svg class="tb-ic" viewBox="0 0 24 28"><rect width="24" height="27" rx="5" fill="#2b93ea"/><path d="M4 4h16l-1 7h-4l-1 14h-4L9 11H5z" fill="#cfe8fb"/></svg></span>
      <span class="app-i"><svg class="tb-ic" viewBox="0 0 24 28"><rect x=".5" y=".5" width="23" height="27" rx="3" fill="#1a5aa8" stroke="#4d94dc"/><text x="12" y="18" class="cadlogo">CAD</text></svg></span>
      <span class="app-i app-s"><svg class="tb-ic" viewBox="0 0 24 28"><path d="M12 0l11 4v10c0 7-5 11-11 14C6 25 1 21 1 14V4z" fill="#f5f5f5"/><path d="M12 2l9 3.500V13h-9z" fill="#2f6fc4"/><path d="M12 13H3c0 6 4 10 9 12z" fill="#2f6fc4"/><path d="M3 5.500L12 2v11H3zM12 13h9c0 6-4 10-9 12z" fill="#f2b632"/></svg></span>
      <span class="app-i"><svg class="tb-ic" viewBox="0 0 24 28"><path d="M1 3h9l2 3h11v20H1z" fill="#f6cf5e"/><path d="M8 14h15v12H8z" fill="#4db3e8"/><path d="M12 20h6v6h-6z" fill="#e8f6fd"/></svg></span>
      <span class="app-i"><svg class="tb-ic" viewBox="0 0 24 28"><path d="M6 6c0-3 3-5 6-5s6 2 6 5v3H6z" fill="#ddd"/><rect x="3" y="8" width="18" height="11" rx="4" fill="#333"/><circle cx="8.500" cy="13" r="2" fill="#cfa34a"/><circle cx="15.500" cy="13" r="2" fill="#cfa34a"/><path d="M7 19h10v6H7z" fill="#eee"/><path d="M2 12v5M22 12v5" stroke="#c62828" stroke-width="2"/></svg></span>
    </div>
    <div class="tray">
      <svg class="sun" viewBox="0 0 20 24"><circle cx="10" cy="12" r="5" fill="#fff"/><path d="M10 1v4M10 19v4M1 12h3M16 12h3M3 5l3 2M17 5l-3 2M3 19l3-2M17 19l-3-2" stroke="#fff"/></svg>
      <span class="temp">17℃</span>
      <svg class="tr-p" viewBox="0 0 16 18"><circle cx="10" cy="4" r="3" fill="none" stroke="#fff"/><path d="M6 15c0-4 2-6 4-6s3 1 4 2" fill="none" stroke="#fff"/><circle cx="5" cy="9" r="2.500" fill="none" stroke="#fff"/><path d="M1 17c0-3 2-5 4-5s4 2 4 5" fill="none" stroke="#fff"/></svg>
      <svg class="tr-up" viewBox="0 0 12 8"><path d="M1 7l5-6 5 6" fill="none" stroke="#fff"/></svg>
      <svg class="tr-o" viewBox="0 0 20 24"><ellipse cx="10" cy="12" rx="9" ry="11" fill="#e8782a"/><path d="M3 17c4-7 7-10 12-11-2 3-1 5 1 7-4 0-5 2-6 6-3-3-4-3-7-2z" fill="#f8e0c8"/></svg>
      <svg class="tr-n" viewBox="0 0 16 20"><path d="M1 2h12v11H1zM5 13v4M10 13v4M2 18h10" fill="none" stroke="#fff"/><path d="M3 4h1v2H3z" fill="#fff"/></svg>
      <svg class="tr-v" viewBox="0 0 18 20"><path d="M1 7h3l5-4v14l-5-4H1z" fill="none" stroke="#fff"/><path d="M11 7c1 2 1 4 0 6M13 5c2 3 2 7 0 10M15 3c3 4 3 10 0 14" fill="none" stroke="#fff"/></svg>
      <span class="ime">中</span>
      <span class="sogou">S</span>
      <div class="clock"><span>11:36</span><span>2019/11/11</span></div>
      <svg class="notif" viewBox="0 0 18 20"><path d="M1 1h16v14h-4v4l-4-4H1z" fill="none" stroke="#fff" stroke-width="1.200"/></svg>
    </div>
  </footer>
</div>
</body>
</html>
```

FILE: styles.css
```css
* { box-sizing: border-box; }
html, body { margin: 0; height: 100%; overflow: hidden; }
body { font: 12px/1.2 "Noto Sans CJK SC", "Liberation Sans", sans-serif; color: #333; background: #fff; }
i { font-style: normal; display: inline-block; }
.sprite { position: absolute; }
.app { position: relative; width: 1920px; height: 1080px; display: flex; flex-direction: column; }

.caret-d, .caret-l { width: 0; height: 0; border-left: 3.5px solid transparent; border-right: 3.5px solid transparent; border-top: 4px solid #555; }
.caret-l { border-top-color: #c4c8cc; }

/* top */
.top { position: relative; height: 42px; flex: none; display: flex; background: #fff; }
.logo-wrap { position: relative; width: 50px; }
.logo { position: absolute; left: 9px; top: 7px; width: 29px; height: 29px; }
.logo-grip { position: absolute; left: 37px; top: 36px; width: 0; height: 0; border-bottom: 4px solid #888; border-left: 4px solid transparent; }
.top-main { flex: 1; display: flex; flex-direction: column; }
.qat { height: 23px; display: flex; align-items: center; padding-left: 3px; }
.qi { width: 17px; height: 17px; margin-right: 6px; flex: none; }
.qc { margin: 0 5px 0 -2px; }
.qat-more { width: 5px; height: 6px; margin-left: 2px; border-top: 1px solid #666; position: relative; }
.qat-more::after { content: ""; position: absolute; left: 0; top: 3px; border-left: 2.5px solid transparent; border-right: 2.5px solid transparent; border-top: 3px solid #666; }
.tabs-row { height: 19px; display: flex; justify-content: space-between; }
.tabs { display: flex; }
.tab { padding: 0 13px; height: 19px; line-height: 19px; color: #444; }
.tab-on { background: #5aa9f5; color: #fff; }
.help { display: flex; align-items: center; height: 19px; padding-right: 2px; }
.search { width: 245px; height: 17px; border: 1px solid #c9c9c9; display: flex; justify-content: space-between; align-items: center; padding: 0 6px 0 3px; color: #c4c4c4; font-size: 12px; margin-right: 9px; }
.mag { width: 12px; height: 12px; }
.avatar { width: 16px; height: 16px; margin-right: 3px; }
.uname { width: 40px; color: #333; margin-right: 7px; }
.hi { width: 14px; height: 16px; flex: none; }
.hi-chat { width: 16px; margin-left: 8px; }
.hq { width: 10px; margin-left: 7px; color: #8b8f94; font: 700 15px "Liberation Sans", sans-serif; }
.hqc { margin-left: 2px; margin-right: 10px; }
.hi-box { margin-left: 9px; }
.title { position: absolute; left: 660px; width: 600px; top: 2px; text-align: center; color: #222; font-size: 12.500px; white-space: nowrap; }
.win { position: absolute; right: 13px; top: 5px; display: flex; gap: 25px; }
.wb { width: 12px; height: 12px; }

/* ribbon */
.ribbon { height: 96px; flex: none; display: flex; background: linear-gradient(#fff 55%, #e9ecee); border-top: 1px solid #ddd; border-bottom: 1px solid #9da1a5; }
.group { display: flex; flex-direction: column; border-right: 1px solid #d0d4d8; margin-top: 1px; margin-bottom: 1px; }
.gbody { height: 71px; display: flex; padding-top: 1px; }
.glabel { flex: 1; display: flex; justify-content: center; align-items: center; gap: 6px; padding-top: 2px; color: #333; font-size: 12px; }
.gc { margin-top: 1px; }
.g1 { width: 147px; padding-left: 2px; }
.g2 { width: 194px; padding-left: 8px; }
.g3 { width: 274px; padding-left: 8px; }
.g4 { width: 237px; padding-left: 9px; }
.g5 { width: 119px; padding-left: 3px; }
.g6 { width: 238px; padding-left: 7px; }
.g7 { width: 430px; padding-left: 6px; }
.gl1 { padding-right: 4px; }
.gl2 { margin-left: -8px; }
.col { display: flex; flex-direction: column; }
.w56 { width: 56px; } .w53 { width: 53px; } .w54 { width: 54px; } .w66 { width: 66px; } .w80 { width: 80px; }
.w87 { width: 87px; margin-left: 6px; } .w89 { width: 89px; } .w99 { width: 99px; } .w103 { width: 103px; } .w111 { width: 111px; }
.it { display: flex; align-items: center; height: 23px; white-space: nowrap; color: #333; }
.ic { width: 17px; height: 17px; margin-right: 2px; flex: none; }
.ca { margin-left: 5px; }
.it-off { color: #b9bcbf; }
.it-on { background: #c8dcf4; height: 20px; width: 76px; padding-left: 4px; }
.big { display: flex; flex-direction: column; align-items: center; }
.big span { line-height: 18px; }
.big-sel { width: 51px; }
.bi-sel { width: 30px; height: 30px; margin: 4px 0 4px; }
.big-pt { width: 48px; color: #b9bcbf; }
.bi-pt { width: 30px; height: 20px; margin: 4px 0 14px; }
.big-ln { width: 36px; }
.bi-ln { width: 30px; height: 30px; margin: 4px 0 4px; }
.col-sm { margin-left: 6px; padding-top: 4px; gap: 7px; }
.sm { width: 16px; height: 16px; }
.big-id { width: 44px; }
.bi-id { width: 22px; height: 28px; margin: 6px 0 3px; }
.col.w99 { margin-left: 5px; }
.big-sm { width: 50px; position: relative; }
.bi-sm { width: 28px; height: 32px; margin: 5px 0 0; }
.sm-c { position: absolute; top: 60px; left: 22px; }

/* combos */
.combos { height: 30px; flex: none; display: flex; gap: 5px; padding: 5px 0 0 3px; background: #c9cdd1; }
.combo { position: relative; width: 100px; height: 23px; background: #fff; border: 1px solid #c2c2c2; padding-left: 3px; line-height: 20px; color: #333; }
.combo .caret-d { position: absolute; right: 5px; top: 9px; }

/* main */
.main { position: relative; flex: none; height: 842px; display: flex; background: #f4f4f4; border-top: 1px solid #777; }
.nav { width: 208px; flex: none; background: #fff; border-right: 1px solid #b8bcc0; border-left: 1px solid #c9c9c9; display: flex; flex-direction: column; }
.nav-head { height: 20px; background: #f0f0f0; color: #777; padding-left: 8px; line-height: 20px; border-bottom: 1px solid #c9c9c9; }
.nav-tools { height: 30px; background: #f0f0f0; display: flex; align-items: center; padding-left: 6px; border-bottom: 1px solid #c9c9c9; }
.spark { width: 13px; height: 13px; }
.nt-btn { margin-left: 130px; width: 25px; height: 24px; background: #e6f1fc; border: 1px solid #6aa9e6; border-radius: 3px; display: flex; align-items: center; justify-content: center; }
.nt-ic { width: 15px; height: 15px; }
.nt-ic2 { width: 16px; height: 16px; margin-left: 9px; }
.tree { padding-top: 4px; }
.tr { height: 24px; display: flex; align-items: center; color: #333; padding-left: 5px; white-space: nowrap; }
.f { width: 14px; height: 14px; margin-right: 5px; flex: none; }
.tc { padding-left: 45px; }
.k { width: 16px; height: 16px; margin-right: 5px; flex: none; }
.tc-on { margin-left: 40px; padding-left: 5px; width: 107px; height: 21px; margin-top: 1px; margin-bottom: 2px; background: #c8d9ef; }

/* panel */
.panel { width: 286px; flex: none; margin-left: 4px; background: #fff; border-left: 1px solid #c2c6ca; border-right: 1px solid #b0b4b8; display: flex; flex-direction: column; }
.p-close { height: 11px; background: #dcdcdc; text-align: right; padding-right: 3px; color: #888; font: 700 13px/11px "Liberation Sans", sans-serif; }
.p-tabs { height: 23px; display: flex; background: #ececec; border-bottom: 1px solid #c9c9c9; }
.pt { width: 64px; text-align: center; line-height: 22px; color: #777; background: #e4e4e4; }
.pt-on { width: 66px; background: #f0f0f0; color: #333; border-left: 1px solid #d0d0d0; border-right: 1px solid #d0d0d0; height: 23px; }
.p-tools { height: 30px; display: flex; align-items: center; background: #f0f0f0; padding-left: 4px; color: #555; border-bottom: 1px solid #c9c9c9; }
.pb { display: flex; align-items: center; margin-right: 15px; white-space: nowrap; }
.pb .caret-d { margin-left: 6px; }
.pb1 { margin-right: 11px; } .pb2 { margin-right: 12px; }
.pb3 { margin-right: 13px; }
.pi { width: 16px; height: 16px; margin-right: 4px; }
.dwg { flex: 1; background: #fff; }
.dh { height: 25px; display: flex; background: #f0f0f0; line-height: 24px; text-align: center; color: #555; }
.dc1 { width: 171px; flex: none; }
.dc2 { width: 35px; flex: none; border-left: 1px solid #d8d8d8; display: flex; justify-content: center; align-items: center; }
.dc3 { width: 62px; flex: none; border-left: 1px solid #d8d8d8; border-right: 1px solid #d8d8d8; }
.dh-on { background: #7eb7f5; color: #fff; border: 1px solid #68a5e8; }
.dr { height: 21px; width: 268px; display: flex; line-height: 20px; border-bottom: 1px solid #d8d8d8; color: #333; }
.dr .dc3 { padding-left: 3px; color: #444; }
.dr-root { border-right: 1px solid #d8d8d8; align-items: center; padding-left: 3px; }
.minus { position: relative; width: 12px; height: 12px; border: 1px solid #555; border-radius: 2px; margin-right: 7px; }
.minus::after { content: ""; position: absolute; left: 2px; right: 2px; top: 4px; height: 1px; background: #333; }
.lv2 { position: relative; padding-left: 31px; white-space: nowrap; }
.lv2::before { content: ""; position: absolute; left: 8px; top: -1px; width: 15px; height: 11px; border-left: 1px solid #d0d0d0; border-bottom: 1px solid #d0d0d0; }
.lk { width: 14px; height: 14px; }
.dr-sel { background: #d3e7fc; height: 22px; }
.dr-sel .dc1 { outline: 2px solid #6b6f73; outline-offset: -2px; }
.layers { height: 330px; flex: none; background: #fff; }
.l-acts { height: 23px; background: #f0f0f0; display: flex; gap: 14px; padding: 0 0 0 4px; line-height: 15px; color: #666; }
.l-acts span { width: 72px; white-space: nowrap; }
.lh { height: 21px; display: flex; background: #f0f0f0; border-top: 1px solid #d0d0d0; text-align: center; line-height: 20px; color: #555; }
.lr { height: 21px; width: 238px; display: flex; align-items: stretch; border-bottom: 1px solid #d8d8d8; }
.lc1 { width: 50px; flex: none; display: flex; justify-content: center; align-items: center; }
.lc2 { width: 36px; flex: none; border-left: 1px solid #d8d8d8; display: flex; justify-content: center; align-items: center; }
.lc3 { width: 152px; flex: none; border-left: 1px solid #d8d8d8; border-right: 1px solid #d8d8d8; }
.tl { text-align: left; padding-left: 4px; line-height: 19px; color: #333; white-space: nowrap; }
.tri { width: 0; height: 0; border-top: 4px solid transparent; border-bottom: 4px solid transparent; border-left: 5px solid #9aa0a6; }
.cbx { position: relative; width: 14px; height: 14px; background: #64aaf8; border-radius: 2px; flex: none; }
.cbx::after { content: ""; position: absolute; left: 3px; top: 3px; width: 8px; height: 4px; border-left: 2px solid #fff; border-bottom: 2px solid #fff; transform: rotate(-45deg); }
.cbx-sq { background: #8cbdf8; border: 2px solid #eee; outline: 1px solid #8b8f94; width: 13px; height: 13px; }
.cbx-sq::after { display: none; }

/* canvas */
.canvas { flex: 1; margin-left: 4px; background: #000; overflow: hidden; }
.cad { display: block; }
.cadt text { font-family: Roboto, "Noto Sans CJK SC", sans-serif; font-weight: 100; }
.cadt .cj { font: 400 25px "Noto Sans CJK SC", sans-serif; }
.t42 { font-size: 42px; } .t38 { font-size: 38px; } .t34 { font-size: 33px; } .t30 { font-size: 28px; }
.c-teal { fill: #0a9090; } .c-grey { fill: #e0e0e0; } .c-yel { fill: #ffff20; }
.cadw text { font-family: "Liberation Sans", sans-serif; fill: #fff; }
.w16 { font-size: 17px; }
.lbl text { font: 300 31px Roboto, "Liberation Sans", sans-serif; }
.bub text { font: 400 16px "Liberation Sans", sans-serif; fill: #fff; text-anchor: middle; }
.bub .b-a { font-size: 20px; font-family: Roboto, sans-serif; font-weight: 300; }
.ax { font: 400 15px "Liberation Sans", sans-serif; text-anchor: middle; }
.ax-y { fill: #0e0; } .ax-x { fill: #f00; }
.tb3d { font: 700 8px "Liberation Sans", sans-serif; fill: #222; }
.vip { font: 700 8px "Liberation Sans", sans-serif; fill: #7a3a00; }
.net { font: 11px "DejaVu Sans", sans-serif; fill: #e8e8e8; }
.pct { font: 300 25px Roboto, sans-serif; fill: #fff; }
.pctm { font: 400 12px "Liberation Sans", sans-serif; fill: #fff; }
.ictext { font-family: "Liberation Sans", sans-serif; font-weight: 700; }
.cadlogo { font: 700 9px "Liberation Sans", sans-serif; fill: #bfe0ff; text-anchor: middle; }

/* dialog */
.dlg { position: absolute; left: 171px; top: 172px; width: 482px; height: 339px; display: flex; flex-direction: column; border: 1px solid #c3cad2; border-top: 0; background: #f0f0f0; }
.dlg-title { height: 27px; flex: none; margin: 0 -1px; background: #2e7fe0; color: #e8f2fd; display: flex; justify-content: space-between; align-items: center; padding: 0 10px 0 8px; font-size: 12px; }
.dlg-x { width: 10px; height: 10px; }
.dlg-body { position: relative; flex: 1; padding: 12px 11px 0 11px; }
.chk-row { display: flex; height: 14px; align-items: center; padding-left: 1px; }
.chk { display: flex; align-items: center; gap: 7px; color: #333; white-space: nowrap; }
.chk1 { width: 88px; }
.chk2 { width: 100px; }
.grid { margin-top: 8px; height: 235px; background: #fff; border: 1px solid #c3c7cb; }
.gh { height: 20px; display: flex; background: #f0f0f0; text-align: center; color: #555; line-height: 19px; }
.gc1 { width: 90px; flex: none; }
.gc2 { width: 90px; flex: none; }
.gc3 { width: 230px; flex: none; white-space: nowrap; }
.gh .gc2, .gh .gc3 { border-left: 1px solid #d0d0d0; }
.gh .gc3 { border-right: 1px solid #d0d0d0; }
.gr { height: 19px; width: 412px; display: flex; line-height: 19px; color: #333; padding-left: 3px; }
.gr .gc1 { width: 90px; } .gr .gc2 { width: 90px; }
.gr-sel { background: #3a99ff; color: #fff; height: 20px; outline: 2px solid #7b8590; outline-offset: -2px; line-height: 20px; }
.dlg-foot { display: flex; justify-content: flex-end; gap: 6px; margin-top: 6px; }
.btn { width: 80px; height: 26px; border: 1px solid #2e7fe0; border-radius: 2px; text-align: center; line-height: 24px; color: #222; background: #f3f6fa; }
.btn-p { background: #2e7fe0; color: #fff; }
.grip { position: absolute; right: 3px; bottom: 3px; width: 7px; height: 7px; background-image: radial-gradient(#8a8f94 1px, transparent 1.200px); background-size: 3px 3px; }

/* status */
.status { height: 30px; flex: none; display: flex; align-items: center; background: #dcdde0; border-bottom: 1px solid #fff; color: #444; padding-left: 2px; font-size: 12px; white-space: nowrap; }
.s1, .s2, .s3, .s4, .s5, .hint, .fps { padding-top: 2px; }
.s1 { width: 263px; letter-spacing: .9px; } .s2 { width: 83px; } .s3 { width: 133px; } .s4 { width: 103px; } .s5 { width: 103px; }
.sb { height: 24px; display: flex; align-items: center; justify-content: center; gap: 2px; background: #e4e5e7; border: 1px solid #b4b6b9; margin-right: 3px; }
.sbi { width: 24px; height: 24px; flex: none; }
.sb1 { width: 25px; background: #dcdde0; }
.sb2 { width: 36px; background: #fff; border: 1px solid #3f87d6; margin-right: 6px; }
.sb3 { width: 23px; margin-right: 5px; background: #d6d7da; }
.sb4 { width: 35px; margin-right: 4px; }
.sb .caret-d { border-top-color: #777; border-left-width: 3px; border-right-width: 3px; border-top-width: 3px; margin-left: -3px; }
.sbt1 { width: 73px; margin-right: 3px; margin-left: -1px; }
.sbt2 { width: 61px; margin-right: 6px; }
.hint { width: 834px; }
.fps { color: #444; }

/* taskbar */
.taskbar { flex: 1; display: flex; align-items: center; background: #12120e; color: #fff; }
.win-logo { width: 18px; height: 18px; margin: 0 15px; flex: none; }
.tsearch { width: 344px; height: 40px; flex: none; background: #f2f2f2; color: #222; display: flex; align-items: center; padding-left: 9px; font-size: 14px; }
.cortana { width: 20px; height: 20px; border: 3px solid #111; border-radius: 50%; margin-right: 11px; }
.tsearch span { flex: 1; }
.tmic { width: 12px; height: 20px; margin-right: 15px; }
.tview { width: 16px; height: 18px; margin-left: 15px; flex: none; }
.apps { display: flex; margin-left: 19px; height: 40px; }
.app-i { position: relative; width: 49px; height: 40px; display: flex; align-items: center; justify-content: center; }
.app-i::after { content: ""; position: absolute; left: 5px; right: 4px; bottom: 0; height: 2px; background: #6db0e0; }
.app-t { background: #3a3a38; }
.app-s { background: #b3611c; }
.app-s::after { left: 0; right: 0; background: #f07a10; }
.tb-ic { width: 24px; height: 28px; }
.g-mark { color: #1d8fe8; font: 700 29px "Liberation Sans", sans-serif; }
.tray { margin-left: auto; display: flex; align-items: center; padding-right: 24px; height: 40px; }
.sun { width: 20px; height: 24px; }
.temp { width: 27px; margin-left: 3px; font-size: 12px; color: #ddd; white-space: nowrap; }
.tr-p { width: 16px; height: 18px; margin-left: 22px; }
.tr-up { width: 12px; height: 8px; margin-left: 22px; }
.tr-o { width: 15px; height: 22px; margin-left: 11px; }
.tr-n { width: 15px; height: 20px; margin-left: 9px; }
.tr-v { width: 16px; height: 18px; margin-left: 8px; }
.ime { margin-left: 9px; font-size: 14px; }
.sogou { width: 15px; height: 26px; margin-left: 13px; background: #e8431a; border-radius: 3px; text-align: center; color: #fff; font: 700 19px/26px "Liberation Sans", sans-serif; }
.clock { width: 80px; margin-left: -2px; display: flex; flex-direction: column; align-items: center; gap: 4px; font-size: 12px; line-height: 14px; color: #eee; }
.notif { width: 17px; height: 20px; margin-left: 17px; }
```
